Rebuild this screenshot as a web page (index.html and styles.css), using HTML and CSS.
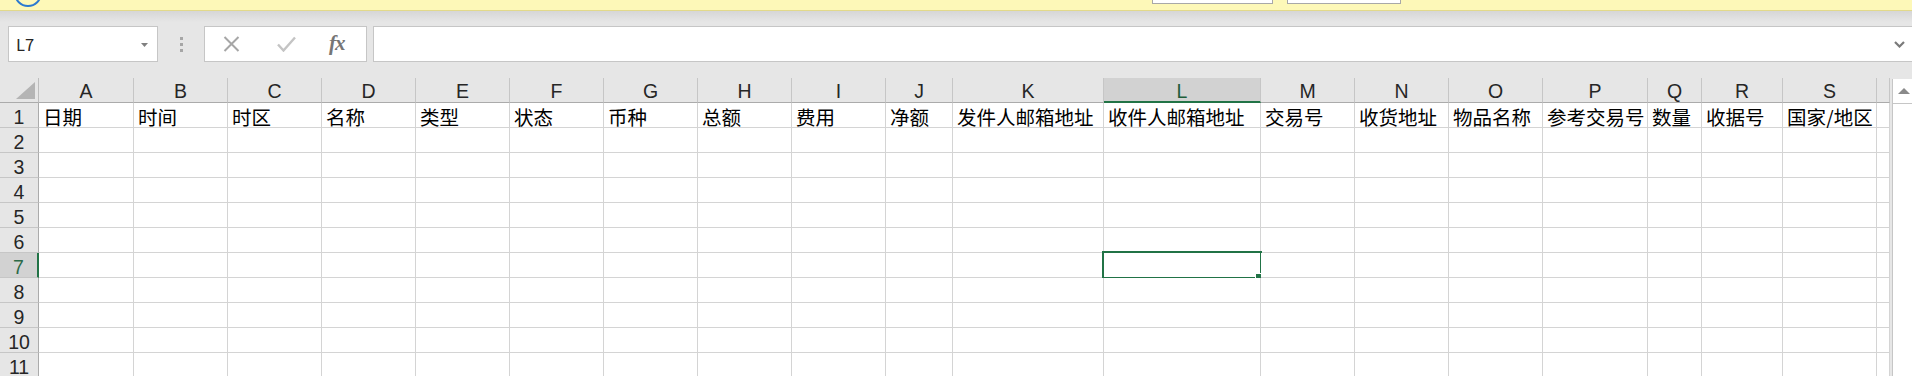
FILE: index.html
```html
<!DOCTYPE html>
<html lang="zh-CN">
  <head>
    <meta charset="UTF-8" />
    <meta name="viewport" content="width=device-width, initial-scale=1.0" />
    <title>工作簿1 - Excel</title>
    <link rel="stylesheet" href="styles.css">
  </head>
  <body>
    <div class="msgbar">
      <svg class="msgicon" width="30" height="10" viewBox="0 0 30 10">
        <circle cx="14" cy="-7" r="13" fill="none" stroke="#2b79d0" stroke-width="2" />
      </svg>
      <span class="msgbtn first"></span>
      <span class="msgbtn"></span>
    </div>
    <div class="edge"></div>

    <div class="formulabar">
      <div class="namebox">
        <span>L7</span>
        <svg width="7" height="4" viewBox="0 0 7 4"><path d="M0 0h7L3.5 4z" fill="#808080" /></svg>
      </div>
      <div class="grip"><i></i><i></i><i></i></div>
      <div class="fbuttons">
        <svg class="cancel" width="17" height="16" viewBox="0 0 17 16">
          <path d="M1.5 1l14 14M15.5 1l-14 14" stroke="#a6a6a6" stroke-width="2" />
        </svg>
        <svg class="enter" width="19" height="16" viewBox="0 0 19 16">
          <path d="M1 8.5l5.5 6L18 1.5" fill="none" stroke="#c4c4c4" stroke-width="2.4" />
        </svg>
        <span class="fx">fx</span>
      </div>
      <div class="finput">
        <svg width="11" height="7" viewBox="0 0 11 7"><path d="M1 1l4.5 4.5L10 1" fill="none" stroke="#7a7a7a" stroke-width="2.2" /></svg>
      </div>
    </div>

    <div class="workarea">
      <div class="sheet" id="sheet"></div>
      <div class="vscroll">
        <div class="up">
          <svg width="12" height="6" viewBox="0 0 12 6"><path d="M0 6h12L6 0z" fill="#8a8a8a" /></svg>
        </div>
      </div>
    </div>

    <script>
      var cols = ["A","B","C","D","E","F","G","H","I","J","K","L","M","N","O","P","Q","R","S",""];
      var headings = ["日期","时间","时区","名称","类型","状态","币种","总额","费用","净额",
        "发件人邮箱地址","收件人邮箱地址","交易号","收货地址","物品名称","参考交易号","数量","收据号","国家/地区",""];
      var selCol = 11; // L
      var selRow = 7;

      var sheet = document.getElementById("sheet");

      function cell(cls, text) {
        var d = document.createElement("div");
        d.className = cls;
        if (text) d.textContent = text;
        sheet.appendChild(d);
        return d;
      }

      // column headers
      var corner = cell("corner");
      corner.innerHTML = '<svg width="19" height="17" viewBox="0 0 19 17"><path d="M19 0v17H0z" fill="#b4b4b4"/></svg>';
      for (var i = 0; i < cols.length; i++) {
        cell(i === selCol ? "ch sel" : "ch", cols[i]);
      }

      // rows
      for (var r = 1; r <= 11; r++) {
        cell(r === selRow ? "rh sel" : "rh", String(r));
        for (var c = 0; c < cols.length; c++) {
          var d = cell("c", r === 1 ? headings[c] : "");
          if (r === selRow && c === selCol) {
            d.classList.add("active");
            d.innerHTML = '<span class="cursor"></span><span class="handle"></span>';
          }
        }
      }
    </script>
  </body>
</html>
```

FILE: styles.css
```css
body {
  margin: 0;
  height: 376px;
  overflow: hidden;
  background: #e6e6e6;
  font-family: "Noto Sans CJK SC", sans-serif;
  color: #000;
}

/* message bar at the top */
.msgbar {
  display: flex;
  height: 10px;
  background: #fdf8b8;
  border-bottom: 1px solid #e2d98a;
  overflow: hidden;
}

.msgicon {
  margin-left: 14px;
  flex: none;
}

.msgbtn {
  flex: none;
  width: 121px;
  height: 20px;
  margin-top: -16px;
  margin-left: 14px;
  box-sizing: border-box;
  background: #fff;
  border: 1px solid #a8a8a8;
}

.msgbtn.first {
  margin-left: 1108px;
}

.msgbtn + .msgbtn {
  width: 114px;
}

.edge {
  height: 15px;
  background: linear-gradient(#d6d6d6, #e6e6e6 11px);
}

/* formula bar */
.formulabar {
  display: flex;
  height: 36px;
  padding-left: 8px;
  margin-bottom: 16px;
}

.namebox {
  width: 150px;
  box-sizing: border-box;
  display: flex;
  align-items: center;
  justify-content: space-between;
  padding: 0 9px 0 7px;
  background: #fff;
  border: 1px solid #c6c6c6;
  font-size: 16.5px;
  color: #262626;
}

.namebox svg {
  margin-top: 1px;
}

.grip {
  width: 46px;
  display: flex;
  flex-direction: column;
  align-items: center;
  justify-content: center;
  gap: 3px;
}

.grip i {
  width: 3px;
  height: 3px;
  background: #a6a6a6;
}

.fbuttons {
  width: 163px;
  box-sizing: border-box;
  display: flex;
  align-items: center;
  padding-left: 18px;
  background: #fff;
  border: 1px solid #c6c6c6;
}

.fbuttons .enter {
  margin-left: 37px;
}

.fx {
  margin-left: 33px;
  font-family: "Liberation Serif", serif;
  font-style: italic;
  font-weight: bold;
  font-size: 21px;
  color: #767676;
  letter-spacing: -1px;
  line-height: 1;
  margin-top: -2px;
}

.finput {
  flex: 1;
  margin-left: 6px;
  display: flex;
  align-items: center;
  justify-content: flex-end;
  padding-right: 7px;
  background: #fff;
  border: 1px solid #c6c6c6;
  border-right: none;
}

/* worksheet */
.workarea {
  display: flex;
  gap: 2px;
  height: 298px;
  overflow: hidden;
}

.sheet {
  display: grid;
  grid-template-columns: 39px 95px repeat(8, 94px) 67px 151px 157px repeat(3, 94px) 105px 54px 81px 94px 13px;
  grid-auto-rows: 25px;
  align-content: start;
  font-size: 19.5px;
  line-height: 27px;
}

.sheet > div {
  box-sizing: border-box;
  white-space: nowrap;
}

.c {
  position: relative;
  padding-left: 4px;
  background: #fff;
  border-right: 1px solid #d4d4d4;
  border-bottom: 1px solid #d4d4d4;
}

.corner {
  display: flex;
  align-items: flex-end;
  justify-content: flex-end;
  padding: 0 3px 3px 0;
  background: #e6e6e6;
  border-right: 1px solid #bdbdbd;
  border-bottom: 1px solid #ababab;
}

.ch,
.rh {
  font-family: "Liberation Sans", Arial, sans-serif;
  text-align: center;
  background: #e6e6e6;
  color: #262626;
}

.ch {
  line-height: 27px;
  border-right: 1px solid #c6c6c6;
  border-bottom: 1px solid #ababab;
}

.ch.sel {
  background: #d2d2d2;
  color: #1d5e3a;
  border-bottom: 2px solid #217346;
}

.rh {
  line-height: 29px;
  border-right: 1px solid #ababab;
  border-bottom: 1px solid #c6c6c6;
}

.rh.sel {
  background: #d2d2d2;
  color: #2c6a47;
  border-right: 2px solid #217346;
}

/* selected cell outline and fill handle */
.cursor {
  position: absolute;
  left: -2px;
  top: -2px;
  right: -2px;
  bottom: -2px;
  border: 2px solid #217346;
}

.handle {
  position: absolute;
  right: -3px;
  bottom: -4px;
  width: 6px;
  height: 6px;
  background: #217346;
  border: 1px solid #fff;
}

.vscroll {
  width: 20px;
  margin-top: 1px;
  box-sizing: border-box;
  background: #fff;
  border-left: 1px solid #c6c6c6;
}

.vscroll .up {
  height: 24px;
  display: flex;
  align-items: center;
  justify-content: center;
  padding-left: 3px;
  border-bottom: 1px solid #c6c6c6;
}
```
